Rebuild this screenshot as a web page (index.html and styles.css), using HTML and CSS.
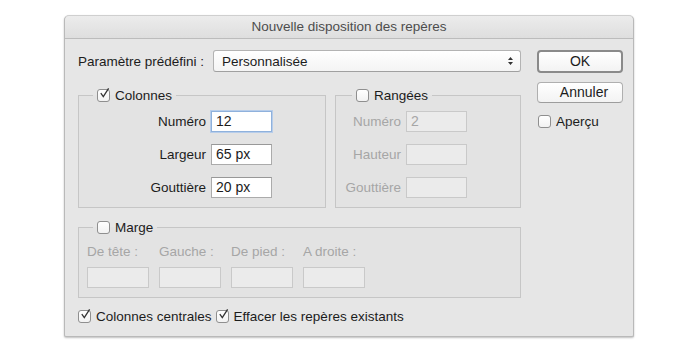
FILE: index.html
```html
<html>
<head>
	<title>Nouvelle disposition des repères</title>
	<link rel="stylesheet" href="styles.css">
</head>
<body>
<div class="dialog">
	<div class="titlebar">Nouvelle disposition des repères</div>
	<div class="content">
		<div class="main">
			<div class="preset">
				<span class="preset-label">Paramètre prédéfini :</span>
				<div class="select">
					<span>Personnalisée</span>
					<svg width="7" height="10" viewBox="0 0 7 10"><path d="M1 4 L3.5 1 L6 4 Z M1 6 L3.5 9 L6 6 Z" fill="#333"/></svg>
				</div>
			</div>

			<div class="groups">
				<fieldset class="group cols">
					<legend><span class="box"><svg width="11" height="11" viewBox="0 0 11 11"><path d="M1.8 5.2 L4.3 8.6 L9.6 0.4" fill="none" stroke="#333" stroke-width="1.3"/></svg></span>Colonnes</legend>
					<div class="fields">
						<label>Numéro</label><div class="input focus">12</div>
						<label>Largeur</label><div class="input">65 px</div>
						<label>Gouttière</label><div class="input">20 px</div>
					</div>
				</fieldset>
				<fieldset class="group rows">
					<legend><span class="box"></span>Rangées</legend>
					<div class="fields">
						<label class="off">Numéro</label><div class="input disabled">2</div>
						<label class="off">Hauteur</label><div class="input disabled"></div>
						<label class="off">Gouttière</label><div class="input disabled"></div>
					</div>
				</fieldset>
			</div>

			<fieldset class="group margin">
				<legend><span class="box"></span>Marge</legend>
				<div class="margin-grid">
					<label class="off">De tête :</label>
					<label class="off">Gauche :</label>
					<label class="off">De pied :</label>
					<label class="off">A droite :</label>
					<div class="input disabled"></div>
					<div class="input disabled"></div>
					<div class="input disabled"></div>
					<div class="input disabled"></div>
				</div>
			</fieldset>

			<div class="footer">
				<span class="check"><span class="box"><svg width="11" height="11" viewBox="0 0 11 11"><path d="M1.8 5.2 L4.3 8.6 L9.6 0.4" fill="none" stroke="#333" stroke-width="1.3"/></svg></span>Colonnes centrales</span>
				<span class="check"><span class="box"><svg width="11" height="11" viewBox="0 0 11 11"><path d="M1.8 5.2 L4.3 8.6 L9.6 0.4" fill="none" stroke="#333" stroke-width="1.3"/></svg></span>Effacer les repères existants</span>
			</div>
		</div>

		<div class="side">
			<div class="button default">OK</div>
			<div class="button">Annuler</div>
			<span class="check preview"><span class="box"></span>Aperçu</span>
		</div>
	</div>
</div>
</body>
</html>
```

FILE: styles.css
```css
body, html {
	margin: 0;
	background: #fff;
	font-family: "Liberation Sans", Arial, sans-serif;
	font-size: 13.5px;
	color: #1c1c1c;
}

.dialog {
	margin: 15px 0 0 64px;
	width: 570px;
	height: 322px;
	box-sizing: border-box;
	background: #e6e6e6;
	border: 1px solid #b9b9b9;
	border-top-color: #cfcfcf;
	border-radius: 5px 5px 2px 2px;
	box-shadow: 0 1px 2px rgba(0,0,0,0.25);
}

.titlebar {
	height: 22px;
	line-height: 22px;
	text-align: center;
	color: #4d4d4d;
	background: linear-gradient(#ececec, #dedede);
	border-bottom: 1px solid #bcbcbc;
	border-radius: 5px 5px 0 0;
}

.content {
	display: flex;
	gap: 16px;
	padding: 11px 0 0 13px;
}

.main {
	width: 443px;
}

.preset {
	display: flex;
	align-items: center;
	height: 22px;
}
.preset-label {
	width: 135px;
}
.select {
	flex: 1;
	height: 22px;
	box-sizing: border-box;
	display: flex;
	align-items: center;
	justify-content: space-between;
	padding: 0 6px 0 8px;
	background: linear-gradient(#ffffff, #f4f4f4);
	border: 1px solid #b3b3b3;
	border-bottom-color: #a0a0a0;
	border-radius: 3px;
}

.groups {
	display: flex;
	gap: 9px;
	margin-top: 15px;
}

fieldset.group {
	margin: 0;
	padding: 0;
	border: 1px solid #c6c6c6;
	background: #e3e3e3;
	min-width: 0;
}
.group legend {
	display: flex;
	align-items: center;
	height: 16px;
	padding: 0 4px 0 4px;
	margin-left: 14px;
}
.group.rows legend {
	margin-left: 16px;
}
.cols {
	width: 248px;
	box-sizing: border-box;
}
.rows {
	width: 186px;
	box-sizing: border-box;
}

.fields {
	display: grid;
	grid-template-columns: 127px 61px;
	column-gap: 5px;
	row-gap: 12px;
	align-items: center;
	padding: 8px 0 9px 0;
}
.rows .fields {
	grid-template-columns: 65px 61px;
}
.fields label {
	text-align: right;
}
label.off {
	color: #a6a6a6;
}

.input {
	height: 21px;
	box-sizing: border-box;
	background: #fff;
	border: 1px solid #ababab;
	border-top-color: #989898;
	padding: 0 4px;
	line-height: 19px;
	font-size: 14px;
}
.input.focus {
	border: 1px solid #8fb1dc;
	box-shadow: 0 0 0 1px #b7cdea;
}
.input.disabled {
	background: #ebebeb;
	border-color: #c9c9c9;
	color: #a6a6a6;
}

fieldset.margin {
	margin-top: 11px;
	width: 443px;
	box-sizing: border-box;
}
.margin-grid {
	display: grid;
	grid-template-columns: repeat(4, 62px);
	column-gap: 10px;
	row-gap: 7px;
	padding: 9px 0 9px 8px;
}
.margin-grid label {
	height: 16px;
	line-height: 16px;
	white-space: nowrap;
}

.box {
	display: inline-block;
	width: 13px;
	height: 13px;
	box-sizing: border-box;
	border: 1px solid #8f8f8f;
	border-radius: 3px;
	background: linear-gradient(#ffffff, #f2f2f2);
	margin-right: 5px;
}
.box svg {
	display: block;
	margin: -2px 0 0 1px;
	overflow: visible;
}

.footer {
	display: flex;
	gap: 4px;
	margin-top: 10px;
	height: 16px;
	align-items: center;
}
.check {
	display: flex;
	align-items: center;
	white-space: nowrap;
}

.side {
	width: 86px;
	display: flex;
	flex-direction: column;
}
.button {
	height: 21px;
	box-sizing: border-box;
	text-align: center;
	line-height: 19px;
	font-size: 14px;
	background: linear-gradient(#ffffff, #f3f3f3);
	border: 1px solid #afafaf;
	border-bottom-color: #9d9d9d;
	border-radius: 4px;
	margin-bottom: 10px;
}
.button.default {
	height: 23px;
	line-height: 19px;
	border: 2px solid #8a8a8a;
	margin-bottom: 9px;
}
.button + .button {
	padding-left: 8px;
}
.preview {
	margin-top: 1px;
	padding-left: 1px;
}
```
